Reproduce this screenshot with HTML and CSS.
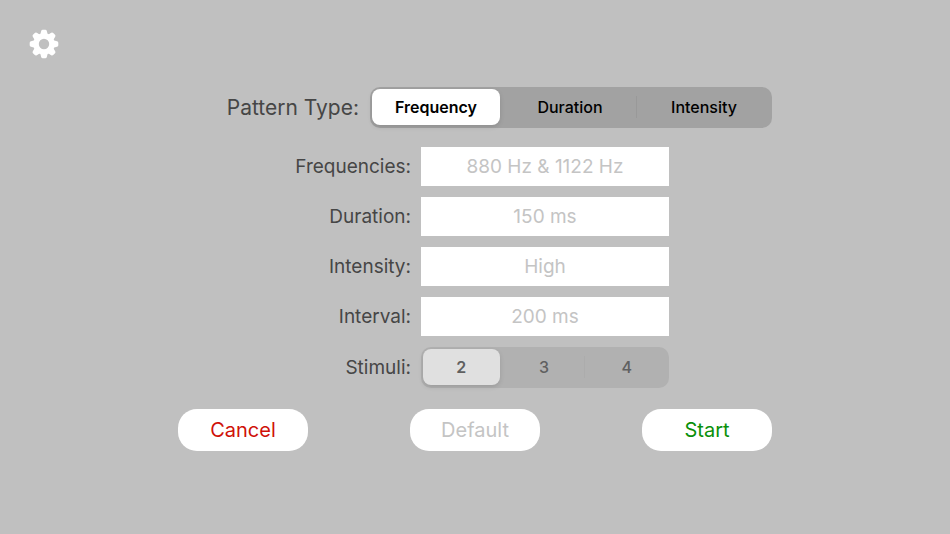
FILE: index.html
```
<!DOCTYPE html>
<html lang="en">
<head>
    <meta charset="UTF-8">
    <meta name="viewport" content="width=device-width, initial-scale=1">
    <title>Pattern Settings</title>
    <link rel="stylesheet" href="styles.css">
</head>
<body>
    <header>
        <button type="button" class="settings" aria-label="Settings">
            <svg viewBox="0 0 30 30" width="30" height="30" fill="#fff" aria-hidden="true">
                <path fill-rule="evenodd" d="M15 4.3 A10.7 10.7 0 1 0 15 25.7 A10.7 10.7 0 1 0 15 4.3 Z M15 9.8 A5.2 5.2 0 1 1 15 20.2 A5.2 5.2 0 1 1 15 9.8 Z"/>
                <path id="tooth" d="M11 6.5 L12.2 2 Q12.5 .7 13.7 .7 H16.3 Q17.5 .7 17.8 2 L19 6.5 Z"/>
                <use href="#tooth" transform="rotate(45 15 15)"/>
                <use href="#tooth" transform="rotate(90 15 15)"/>
                <use href="#tooth" transform="rotate(135 15 15)"/>
                <use href="#tooth" transform="rotate(180 15 15)"/>
                <use href="#tooth" transform="rotate(225 15 15)"/>
                <use href="#tooth" transform="rotate(270 15 15)"/>
                <use href="#tooth" transform="rotate(315 15 15)"/>
            </svg>
        </button>
    </header>
    <form id="patternForm">
        <div class="type-row">
            <span class="type-label" id="typeLabel">Pattern Type:</span>
            <div class="segmented" role="radiogroup" aria-labelledby="typeLabel">
                <label><input type="radio" name="type" value="frequency" checked><span>Frequency</span></label>
                <label><input type="radio" name="type" value="duration"><span>Duration</span></label>
                <label><input type="radio" name="type" value="intensity"><span>Intensity</span></label>
            </div>
        </div>
        <div class="fields">
            <label for="frequencies">Frequencies:</label>
            <input type="text" id="frequencies" placeholder="880 Hz &amp; 1122 Hz">
            <label for="duration">Duration:</label>
            <input type="text" id="duration" placeholder="150 ms">
            <label for="intensity">Intensity:</label>
            <input type="text" id="intensity" placeholder="High">
            <label for="interval">Interval:</label>
            <input type="text" id="interval" placeholder="200 ms">
            <span class="field-label" id="stimuliLabel">Stimuli:</span>
            <div class="segmented disabled" role="radiogroup" aria-labelledby="stimuliLabel">
                <label><input type="radio" name="stimuli" value="2" checked disabled><span>2</span></label>
                <label><input type="radio" name="stimuli" value="3" disabled><span>3</span></label>
                <label><input type="radio" name="stimuli" value="4" disabled><span>4</span></label>
            </div>
        </div>
        <div class="actions">
            <button type="button" class="cancel">Cancel</button>
            <button type="reset" disabled>Default</button>
            <button type="submit" class="start">Start</button>
        </div>
    </form>
</body>
</html>
```

FILE: styles.css
```
* {
    box-sizing: border-box;
}
body {
    margin: 0;
    font-family: Inter, "Liberation Sans", sans-serif;
    font-size: 19px;
    color: #464646;
    background-color: #c0c0c0;
}
button, input {
    font-family: inherit;
}
header {
    padding: 29px 29px 28px;
}
.settings {
    display: block;
    padding: 0;
    border: none;
    background: none;
}
.settings svg {
    display: block;
}
form {
    max-width: 594px;
    margin: 0 auto;
}
.type-row {
    display: flex;
    align-items: center;
    justify-content: flex-end;
    gap: 11px;
    margin-bottom: 19px;
}
.type-label {
    font-size: 21px;
}
.type-row .segmented {
    width: 402px;
}

/* segmented controls */
.segmented {
    display: grid;
    grid-template-columns: repeat(3, 1fr);
    gap: 6px;
    padding: 2px 4px 3px 2px;
    border-radius: 10px;
    background-color: #a2a2a2;
}
.segmented label {
    position: relative;
    font-size: 16px;
    font-weight: 500;
    color: #000;
    text-align: center;
}
.segmented input {
    position: absolute;
    opacity: 0;
    margin: 0;
}
.segmented span {
    display: block;
    line-height: 36px;
    border-radius: 8px;
}
.segmented input:checked + span {
    font-weight: 600;
    background-color: #fff;
    box-shadow: 0 2px 5px rgba(0, 0, 0, .12);
}
.segmented label:last-child::before {
    content: "";
    position: absolute;
    left: -4px;
    top: 7px;
    bottom: 7px;
    width: 1px;
    background-color: #999;
}
.segmented.disabled {
    background-color: #b1b1b1;
}
.segmented.disabled label {
    color: #606060;
}
.segmented.disabled input:checked + span {
    background-color: #e0e0e0;
}
.segmented.disabled label:last-child::before {
    background-color: #acacac;
}

.fields {
    display: grid;
    grid-template-columns: 1fr 248px;
    align-items: center;
    gap: 11px 10px;
    padding-right: 103px;
}
.fields > label, .field-label {
    text-align: right;
}
.fields > input {
    width: 100%;
    height: 39px;
    padding: 0 8px;
    border: none;
    font-size: 19px;
    text-align: center;
    background-color: #fff;
}
.fields > input::placeholder {
    color: #c4c4c4;
}

.actions {
    display: flex;
    justify-content: space-between;
    margin-top: 21px;
}
.actions button {
    width: 130px;
    height: 42px;
    padding: 0;
    border: none;
    border-radius: 19px;
    font-size: 20px;
    background-color: #fff;
}
.actions .cancel {
    color: #cf1108;
}
.actions .start {
    color: #0a900a;
}
.actions button:disabled {
    color: #c4c4c4;
}
```
